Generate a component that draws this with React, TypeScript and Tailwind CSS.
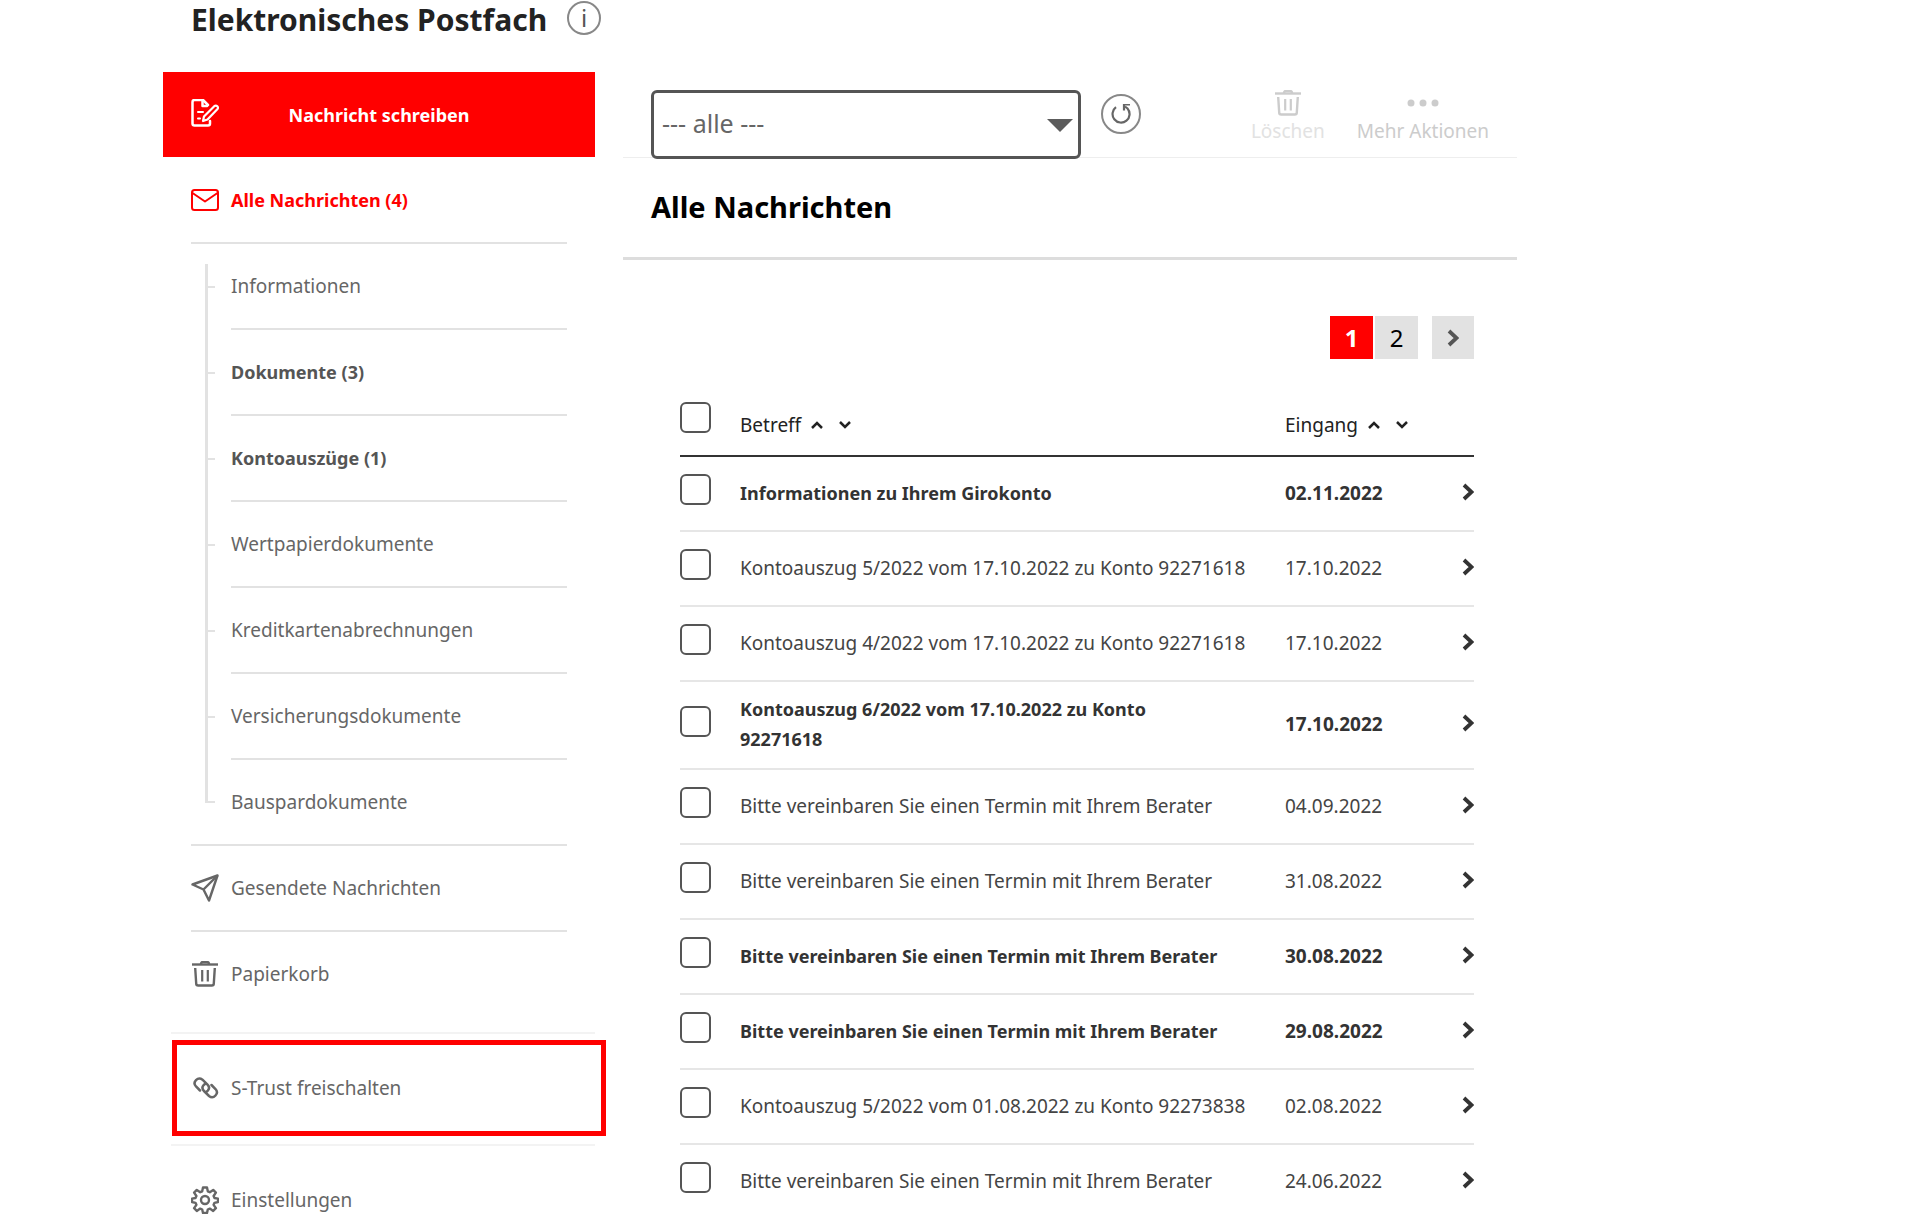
import { useState } from 'react'

type IconProps = { className?: string }

function ComposeIcon({ className }: IconProps) {
  return (
    <svg viewBox="0 0 28 28" fill="none" stroke="currentColor" strokeWidth="2.500" strokeLinejoin="round" strokeLinecap="round" className={className} aria-hidden="true">
      <path d="M19 22v2.500q0 2-2 2H3.500q-2 0-2-2V3q0-2 2-2H12l5 5" />
      <path d="M11.500 1.500V7H16" />
      <path d="M7 13h5M7 19.500h2" strokeWidth="2" />
      <path d="M12 22l1-4.500L23.500 7q1.500-1 2.800.3t.2 2.700L16.500 20.500z" strokeWidth="2.200" />
    </svg>
  )
}

function MailIcon({ className }: IconProps) {
  return (
    <svg viewBox="0 0 28 22" fill="none" stroke="currentColor" strokeWidth="2" strokeLinejoin="round" className={className} aria-hidden="true">
      <rect x="1" y="1" width="26" height="20" rx="2.500" />
      <path d="M1.500 4L14 12.500 26.500 4" />
    </svg>
  )
}

function SendIcon({ className }: IconProps) {
  return (
    <svg viewBox="0 0 28 28" fill="none" stroke="currentColor" strokeWidth="2.400" strokeLinejoin="round" className={className} aria-hidden="true">
      <path d="M26.500 1.500L1.500 10.500 12.500 15.500 18 26.500z" />
      <path d="M26.500 1.500L12.500 15.500" />
    </svg>
  )
}

function TrashIcon({ className }: IconProps) {
  return (
    <svg viewBox="0 0 26 26" fill="none" stroke="currentColor" strokeWidth="2.400" className={className} aria-hidden="true">
      <path d="M0 3.500h26" />
      <path d="M9 3q0-2 2-2h4q2 0 2 2" />
      <path d="M3.200 7l1 15.500q0 2 2 2h13.600q2 0 2-2l1-15.500" />
      <path d="M10.200 9v11.500M15.800 9v11.500" strokeWidth="2.200" />
    </svg>
  )
}

function LinkIcon({ className }: IconProps) {
  return (
    <svg viewBox="0 0 26 24" fill="none" stroke="currentColor" strokeWidth="2.500" strokeLinecap="round" className={className} aria-hidden="true">
      <path d="M7 14.500L3 10.500q-3-3.200 0-6.300t6.500-.5l5 5q3 3 .3 6l-1.300 1" />
      <path d="M18.500 9l4 4q3 3.200 0 6.500t-6.500.5l-5-5q-3-3-.3-6l1.300-1" />
    </svg>
  )
}

function GearIcon({ className }: IconProps) {
  return (
    <svg viewBox="0 0 28 28" fill="none" stroke="currentColor" strokeWidth="2.400" strokeLinejoin="round" className={className} aria-hidden="true">
      <path d="M12 1.500h4l.8 3.800 2 .9 3.400-2.300 2.700 2.700-2.300 3.400.9 2 3.500.6v3.400l-3.500.8-.9 2 2.300 3.400-2.700 2.700-3.400-2.300-2 .9-.8 3.500h-4l-.8-3.500-2-.9-3.400 2.300-2.700-2.700 2.300-3.400-.9-2-3.500-.8v-3.400l3.500-.6.9-2-2.300-3.400 2.700-2.700 3.400 2.300 2-.9z" />
      <circle cx="14" cy="14" r="4" />
    </svg>
  )
}

function ReloadIcon({ className }: IconProps) {
  return (
    <svg viewBox="0 0 20 20" fill="none" stroke="currentColor" strokeWidth="2.200" className={className} aria-hidden="true">
      <path d="M5 3.200A8.500 8.500 0 1 0 16.500 4.500L14 2.500" />
      <path d="M12 .500h7M13 0v6.500" />
    </svg>
  )
}

function Chevron({ className }: IconProps) {
  return (
    <svg viewBox="0 0 12 18" fill="none" stroke="currentColor" strokeWidth="3.800" className={className} aria-hidden="true">
      <path d="M2 2l7.500 7-7.500 7" />
    </svg>
  )
}

function SortButtons({ column }: { column: string }) {
  return (
    <span className="flex items-center gap-4">
      <button aria-label={`${column} aufsteigend sortieren`}>
        <svg viewBox="0 0 12 8" fill="none" stroke="currentColor" strokeWidth="2.500" className="w-3 h-2">
          <path d="M1 7l5-5 5 5" />
        </svg>
      </button>
      <button aria-label={`${column} absteigend sortieren`}>
        <svg viewBox="0 0 12 8" fill="none" stroke="currentColor" strokeWidth="2.500" className="w-3 h-2">
          <path d="M1 1l5 5 5-5" />
        </svg>
      </button>
    </span>
  )
}

const folders = [
  { label: 'Informationen', unread: 0 },
  { label: 'Dokumente', unread: 3 },
  { label: 'Kontoauszüge', unread: 1 },
  { label: 'Wertpapierdokumente', unread: 0 },
  { label: 'Kreditkartenabrechnungen', unread: 0 },
  { label: 'Versicherungsdokumente', unread: 0 },
  { label: 'Bauspardokumente', unread: 0 },
]

const messages = [
  { subject: 'Informationen zu Ihrem Girokonto', date: '02.11.2022', unread: true },
  { subject: 'Kontoauszug 5/2022 vom 17.10.2022 zu Konto 92271618', date: '17.10.2022', unread: false },
  { subject: 'Kontoauszug 4/2022 vom 17.10.2022 zu Konto 92271618', date: '17.10.2022', unread: false },
  { subject: 'Kontoauszug 6/2022 vom 17.10.2022 zu Konto 92271618', date: '17.10.2022', unread: true },
  { subject: 'Bitte vereinbaren Sie einen Termin mit Ihrem Berater', date: '04.09.2022', unread: false },
  { subject: 'Bitte vereinbaren Sie einen Termin mit Ihrem Berater', date: '31.08.2022', unread: false },
  { subject: 'Bitte vereinbaren Sie einen Termin mit Ihrem Berater', date: '30.08.2022', unread: true },
  { subject: 'Bitte vereinbaren Sie einen Termin mit Ihrem Berater', date: '29.08.2022', unread: true },
  { subject: 'Kontoauszug 5/2022 vom 01.08.2022 zu Konto 92273838', date: '02.08.2022', unread: false },
  { subject: 'Bitte vereinbaren Sie einen Termin mit Ihrem Berater', date: '24.06.2022', unread: false },
]

const checkboxClass =
  'block appearance-none w-[31px] h-[31px] rounded-md border-2 border-[#555] bg-white checked:bg-[#555]'

function Sidebar() {
  return (
    <aside className="w-[432px] shrink-0 text-[#666]">
      <button className="flex items-center w-full h-[85px] px-7 bg-[#f00] text-white text-lg font-bold">
        <ComposeIcon className="w-7 h-7 -mt-1" />
        <span className="flex-1 pr-7 text-center">Nachricht schreiben</span>
      </button>

      <nav className="px-7">
        <a href="#alle" className="flex items-center gap-3 h-[87px] border-b-2 border-[#e2e2e2] text-[#f00] text-lg font-bold">
          <MailIcon className="w-7 h-[22px]" />
          Alle Nachrichten (4)
        </a>

        {/* Folder tree */}
        <ul className="relative border-b-2 border-[#e2e2e2]">
          <li aria-hidden="true" className="absolute left-[14px] top-5 bottom-[41px] w-[3px] bg-[#e2e2e2]" />
          {folders.map((folder) => (
            <li key={folder.label} className="group flex items-center h-[86px] last:h-[84px]">
              <span className="w-[10px] h-[2px] ml-[14px] mr-4 bg-[#e2e2e2]" />
              <a
                href="#ordner"
                className={`flex flex-1 items-center h-full border-b-2 border-[#e2e2e2] group-last:border-b-0 ${
                  folder.unread ? 'text-lg font-bold text-[#555]' : ''
                }`}
              >
                {folder.label} {folder.unread > 0 && `(${folder.unread})`}
              </a>
            </li>
          ))}
        </ul>

        <a href="#gesendet" className="flex items-center gap-3 h-[86px] border-b-2 border-[#e2e2e2]">
          <SendIcon className="w-7 h-7" />
          Gesendete Nachrichten
        </a>
        <a href="#papierkorb" className="flex items-center gap-3 h-[84px]">
          <TrashIcon className="w-[26px] h-[26px] mx-px" />
          Papierkorb
        </a>
      </nav>

      <div className="ml-2 mt-4 -mr-3 pb-2">
        <div className="mr-3 h-[2px] bg-[#f3f3f3]" />
        <a href="#s-trust" className="flex items-center gap-3 h-24 mt-[6px] mb-2 border-[5px] border-[#f00] ml-px mr-px pl-4">
          <LinkIcon className="w-[26px] h-6" />
          S-Trust freischalten
        </a>
        <div className="mr-3 h-[2px] bg-[#f3f3f3]" />
      </div>
      <a href="#einstellungen" className="flex items-center gap-3 h-[92px] px-7">
        <GearIcon className="w-7 h-7" />
        Einstellungen
      </a>
    </aside>
  )
}

function Toolbar() {
  return (
    <div className="flex items-start h-[86px] px-7 pt-[18px] border-b border-[#eee]">
      <div className="relative w-[430px]">
        <select
          aria-label="Filter"
          className="block appearance-none w-full h-[69px] pl-2 pb-1 rounded-md border-[3px] border-[#555] bg-white text-[25px] text-[#666]"
        >
          <option>--- alle ---</option>
        </select>
        <svg viewBox="0 0 26 13" fill="#5c5c5c" className="absolute right-2 top-[29px] w-[26px] h-[13px] pointer-events-none">
          <path d="M0 0h26L13 13z" />
        </svg>
      </div>
      <button aria-label="Aktualisieren" className="flex items-center justify-center size-10 ml-5 mt-1 rounded-full border-2 border-[#888] text-[#666]">
        <ReloadIcon className="size-5" />
      </button>
      <div className="flex gap-8 ml-auto text-[#ccc]">
        <button disabled className="flex flex-col items-center">
          <TrashIcon className="w-[26px] h-[26px]" />
          <span className="text-[#e2e2e2]">Löschen</span>
        </button>
        <button disabled className="flex flex-col items-center">
          <svg viewBox="0 0 32 26" fill="currentColor" className="w-8 h-[26px]">
            <circle cx="4" cy="13" r="3.500" />
            <circle cx="16" cy="13" r="3.500" />
            <circle cx="28" cy="13" r="3.500" />
          </svg>
          <span>Mehr Aktionen</span>
        </button>
      </div>
    </div>
  )
}

function MessageTable() {
  const [selected, setSelected] = useState<number[]>([])

  const toggle = (index: number) => {
    setSelected(selected.includes(index) ? selected.filter((i) => i !== index) : [...selected, index])
  }

  return (
    <table className="w-full table-fixed text-left text-[#444]">
      <colgroup>
        <col className="w-[60px]" />
        <col />
        <col className="w-[160px]" />
        <col className="w-[29px]" />
      </colgroup>
      <thead>
        <tr className="h-[66px] border-b-2 border-[#333] text-[#222]">
          <th className="align-top pt-3">
            <input
              type="checkbox"
              aria-label="Alle auswählen"
              className={checkboxClass}
              checked={selected.length === messages.length}
              onChange={(e) => setSelected(e.target.checked ? messages.map((_, i) => i) : [])}
            />
          </th>
          <th className="pt-1 font-normal">
            <span className="flex items-center gap-[10px]">Betreff <SortButtons column="Betreff" /></span>
          </th>
          <th className="pt-1 font-normal">
            <span className="flex items-center gap-[10px]">Eingang <SortButtons column="Eingang" /></span>
          </th>
          <th />
        </tr>
      </thead>
      <tbody>
        {messages.map((message, index) => (
          <tr key={index} className={`h-[75px] border-b-2 border-[#e6e6e6] ${message.unread ? 'font-bold text-[#333]' : ''}`}>
            <td className="pb-2">
              <input
                type="checkbox"
                aria-label={message.subject}
                className={checkboxClass}
                checked={selected.includes(index)}
                onChange={() => toggle(index)}
              />
            </td>
            <td className={`pt-3 pb-[14px] ${message.unread ? 'pr-14 text-lg leading-[30px]' : 'pr-7'}`}>{message.subject}</td>
            <td className="pb-[2px]">{message.date}</td>
            <td className="pb-1">
              <a href="#nachricht" aria-label="Öffnen" className="flex justify-end text-[#333]">
                <Chevron className="w-3 h-[18px]" />
              </a>
            </td>
          </tr>
        ))}
      </tbody>
    </table>
  )
}

export default function App() {
  return (
    <div className="h-screen overflow-hidden bg-white font-['Noto_Sans',sans-serif] text-[19px] leading-[30px]">
      <div className="max-w-[1517px] pl-[163px]">
        <header className="flex items-start h-[72px] pl-7 gap-5">
          <h1 className="text-[30px] leading-10 font-bold text-[#222]">Elektronisches Postfach</h1>
          <button aria-label="Hilfe" className="flex items-center justify-center mt-px w-[34px] h-[34px] rounded-full border-2 border-[#888] text-[#555] text-2xl">
            i
          </button>
        </header>

        <div className="flex gap-7">
          <Sidebar />
          <main className="flex-1 min-w-0">
            <Toolbar />
            <div className="flex items-center h-[102px] px-7 pb-[2px] border-b-[3px] border-[#ddd]">
              <h2 className="text-[29px] font-bold text-black">Alle Nachrichten</h2>
            </div>

            <div className="pl-[57px] pr-[43px] pt-14">
              <nav aria-label="Seiten" className="flex justify-end gap-[2px] text-2xl text-black">
                <button className="w-[43px] h-[43px] bg-[#f00] text-white font-bold">1</button>
                <button className="w-[43px] h-[43px] bg-[#e2e2e2]">2</button>
                <button aria-label="Weiter" className="flex items-center justify-center w-[42px] h-[43px] ml-3 bg-[#e2e2e2] text-[#555]">
                  <Chevron className="w-3 h-[18px]" />
                </button>
              </nav>
              <div className="pt-[31px]">
                <MessageTable />
              </div>
            </div>
          </main>
        </div>
      </div>
    </div>
  )
}
